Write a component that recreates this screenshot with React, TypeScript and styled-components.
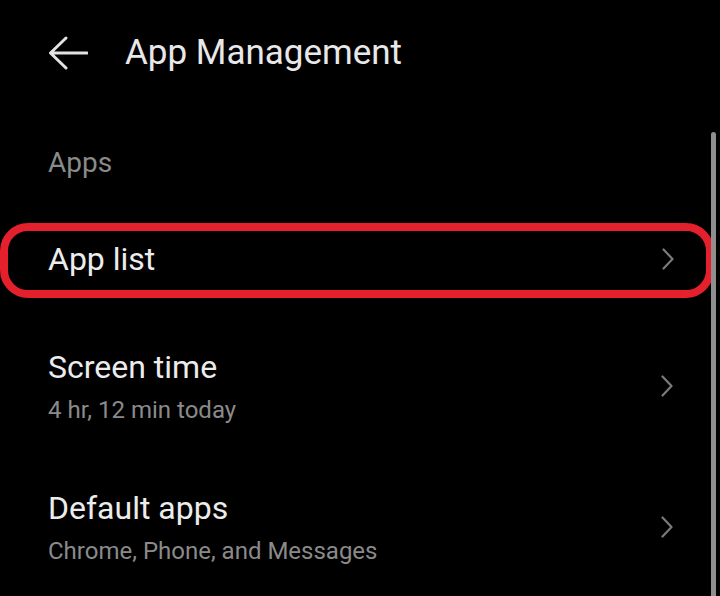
import React from "react";
import styled, { createGlobalStyle } from "styled-components";

const GlobalStyle = createGlobalStyle`
  html, body {
    margin: 0;
    padding: 0;
    background: #000;
  }
  body {
    font-family: Roboto, "Noto Sans", "Liberation Sans", sans-serif;
    -webkit-font-smoothing: antialiased;
  }
`;

type Item = {
  title: string;
  subtitle?: string;
  highlighted?: boolean;
};

const items: Item[] = [
  { title: "App list", highlighted: true },
  { title: "Screen time", subtitle: "4 hr, 12 min today" },
  { title: "Default apps", subtitle: "Chrome, Phone, and Messages" },
];

const BackArrow = () => (
  <svg width="40" height="34" viewBox="0 0 40 34" fill="none">
    <path
      d="M39 17H3M18 2L2.5 17L18 32"
      stroke="#e2e2e2"
      strokeWidth="3"
      strokeLinecap="round"
      strokeLinejoin="round"
    />
  </svg>
);

const Chevron = () => (
  <svg width="12" height="22" viewBox="0 0 12 22" fill="none">
    <path
      d="M1.5 1.5L10.5 11L1.5 20.5"
      stroke="#7a7a7a"
      strokeWidth="2.2"
      strokeLinecap="round"
      strokeLinejoin="round"
    />
  </svg>
);

const App = () => {
  return (
    <Screen>
      <GlobalStyle />
      <Header>
        <BackButton aria-label="Back">
          <BackArrow />
        </BackButton>
        <Title>App Management</Title>
      </Header>

      <SectionLabel>Apps</SectionLabel>

      <List>
        {items.map((item) => (
          <Row key={item.title} $highlighted={item.highlighted}>
            <TextBlock>
              <ItemTitle>{item.title}</ItemTitle>
              {item.subtitle && <ItemSubtitle>{item.subtitle}</ItemSubtitle>}
            </TextBlock>
            <Chevron />
          </Row>
        ))}
      </List>

      <Scrollbar />
    </Screen>
  );
};

export default App;

const Screen = styled.div`
  position: relative;
  width: 720px;
  height: 596px;
  overflow: hidden;
  background: #000;
`;

const Header = styled.header`
  display: flex;
  align-items: center;
  gap: 37px;
  height: 106px;
  padding: 0 48px;
  box-sizing: border-box;
`;

const BackButton = styled.button`
  display: flex;
  padding: 0;
  border: 0;
  background: none;
  cursor: pointer;
`;

const Title = styled.h1`
  margin: 0;
  font-size: 35px;
  line-height: 40px;
  font-weight: 400;
  color: #e8e8e8;
`;

const SectionLabel = styled.div`
  margin-top: 39px;
  padding-left: 48px;
  font-size: 28px;
  line-height: 36px;
  color: #8a8a8a;
`;

const List = styled.div`
  display: flex;
  flex-direction: column;
  margin-top: 42px;
`;

const Row = styled.div<{ $highlighted?: boolean }>`
  display: flex;
  align-items: center;
  justify-content: space-between;
  box-sizing: border-box;
  ${(p) =>
    p.$highlighted
      ? `
    height: 75px;
    margin: 0 6px 17px 0;
    padding: 0 32px 4px 40px;
    border: 8px solid #e3202b;
    border-radius: 28px;
  `
      : `
    padding: 32px 47px 31px 48px;
  `}
`;

const TextBlock = styled.div`
  display: flex;
  flex-direction: column;
  gap: 8px;
`;

const ItemTitle = styled.div`
  font-size: 32px;
  line-height: 40px;
  color: #ececec;
`;

const ItemSubtitle = styled.div`
  font-size: 24px;
  line-height: 30px;
  color: #8a8a8a;
`;

const Scrollbar = styled.div`
  position: absolute;
  top: 132px;
  bottom: 0;
  right: 4px;
  width: 5px;
  border-radius: 3px 3px 0 0;
  background: #8e8e8e;
`;
